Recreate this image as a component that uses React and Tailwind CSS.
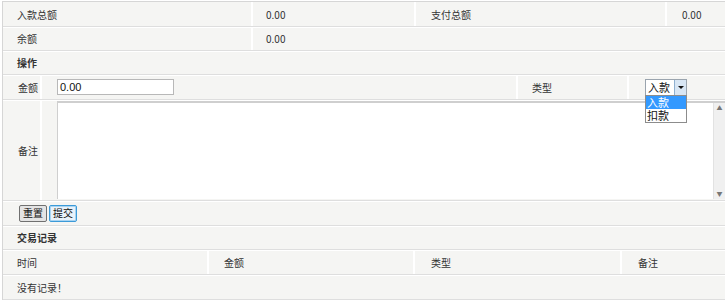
import React from "react";

const F = { fontFamily: '"Noto Sans CJK SC", "Liberation Sans", sans-serif' };

function Row({ children, h = "h-[25px]", cls = "" }) {
  return (
    <div className={`flex ${h} border-b border-[#dedede] shadow-[0_1px_0_#ffffff] ${cls}`}>{children}</div>
  );
}

function Cell({ w, children, cls = "", last = false }) {
  return (
    <div
      className={`flex items-center shrink-0 ${w} ${last ? "" : "border-r-2 border-[#ffffff]"} ${cls}`}
    >
      {children}
    </div>
  );
}

export default function App() {
  return (
    <div className="w-[725px] h-[306px] bg-white overflow-hidden text-[10px] text-[#333]" style={F}>
      <div className="ml-[2px] mt-[1px] border-l border-t border-[#d6d6d6] bg-[#f5f5f3] h-[299px] relative">
        <Row>
          <Cell w="w-[250px]" cls="pl-[14px]">入款总额</Cell>
          <Cell w="w-[163px]" cls="pl-[13px]">0.00</Cell>
          <Cell w="w-[251px]" cls="pl-[15px]">支付总额</Cell>
          <Cell w="flex-1" cls="pl-[15px]" last>0.00</Cell>
        </Row>
        <Row h="h-[24px]">
          <Cell w="w-[250px]" cls="pl-[14px]">余额</Cell>
          <Cell w="flex-1" cls="pl-[13px]" last>0.00</Cell>
        </Row>
        <Row h="h-[24px]">
          <Cell w="flex-1" cls="pl-[14px] font-bold" last>操作</Cell>
        </Row>
        <Row>
          <Cell w="w-[39px]" cls="pl-[15px]">金额</Cell>
          <Cell w="w-[476px]" cls="pl-[15px]">
            <div className="w-[117px] h-[16px] bg-white border border-[#b8b8b8] flex items-center pl-[2px] text-[11px] text-[#111]" style={{ fontFamily: '"Liberation Sans", sans-serif' }}>
              0.00
            </div>
          </Cell>
          <Cell w="w-[111px]" cls="pl-[14px]">类型</Cell>
          <Cell w="flex-1" cls="pl-[16px]" last>
            <div className="relative">
              <div className="w-[42px] h-[17px] bg-white border border-[#9aa4ae] flex items-center text-[11px] text-[#111]">
                <span className="pl-[2px] flex-1">入款</span>
                <span className="w-[12px] h-full bg-[#d8e6f4] border-l border-[#8fb0d0] flex items-center justify-center">
                  <span className="w-0 h-0 border-l-[3px] border-r-[3px] border-t-[3px] border-l-transparent border-r-transparent border-t-[#111]" />
                </span>
              </div>
              <div className="absolute left-0 top-[16px] z-10 w-[42px] bg-white border border-[#8c8c8c] text-[11px] text-[#111]">
                <div className="h-[13px] bg-[#3399ff] text-white pl-[1px] leading-[13px]">入款</div>
                <div className="h-[13px] pl-[1px] leading-[13px]">扣款</div>
              </div>
            </div>
          </Cell>
        </Row>
        <Row h="h-[101px]">
          <Cell w="w-[39px]" cls="pl-[15px]">备注</Cell>
          <div className="flex-1 pl-[15px] pt-[1px] pb-[1px] flex">
            <div className="flex-1 bg-white border-t-2 border-l border-[#cfcfcf] flex justify-end">
              <div className="w-[12px] bg-[#f0f0f0] border-l border-[#e2e2e2] flex flex-col justify-between items-center py-[2px] text-[6px] text-[#777]">
                <span className="leading-none">▲</span>
                <span className="leading-none">▼</span>
              </div>
            </div>
          </div>
        </Row>
        <Row>
          <div className="flex items-center gap-[2px] pl-[16px]">
            <button className="h-[17px] px-[3px] bg-[#e4e4e4] border border-[#707070] rounded-[2px] text-[10px] text-[#111] leading-none" style={F}>重置</button>
            <button className="h-[17px] px-[3px] bg-[#e9f2fa] border border-[#3c9ad8] rounded-[2px] text-[10px] text-[#111] leading-none shadow-[inset_0_0_0_1px_#a8d4f2]" style={F}>提交</button>
          </div>
        </Row>
        <Row h="h-[24px]">
          <Cell w="flex-1" cls="pl-[14px] font-bold" last>交易记录</Cell>
        </Row>
        <Row>
          <Cell w="w-[206px]" cls="pl-[14px]">时间</Cell>
          <Cell w="w-[206px]" cls="pl-[15px]">金额</Cell>
          <Cell w="w-[207px]" cls="pl-[16px]">类型</Cell>
          <Cell w="flex-1" cls="pl-[16px]" last>备注</Cell>
        </Row>
        <Row>
          <Cell w="flex-1" cls="pl-[14px]" last>没有记录！</Cell>
        </Row>
      </div>
    </div>
  );
}
